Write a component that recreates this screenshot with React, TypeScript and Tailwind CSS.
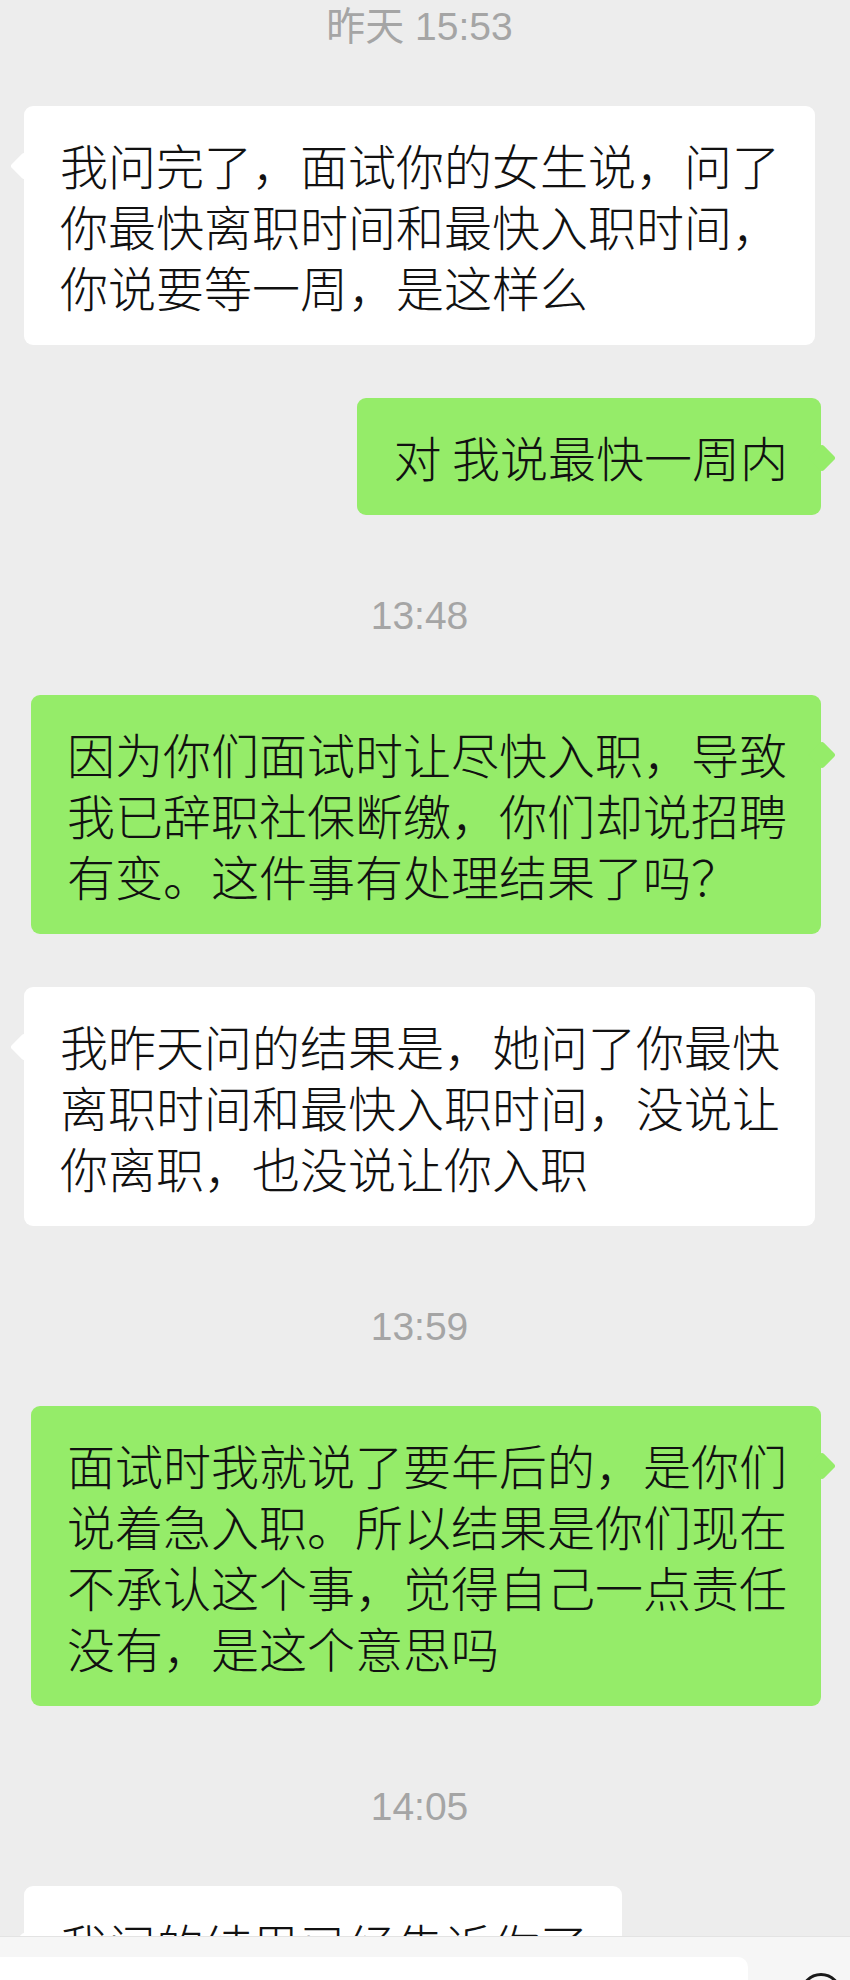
import React from 'react';

type Msg =
  | { kind: 'time'; text: string }
  | { kind: 'in' | 'out'; text: string };

const messages: Msg[] = [
  { kind: 'time', text: '昨天 15:53' },
  { kind: 'in', text: '我问完了，面试你的女生说，问了你最快离职时间和最快入职时间，你说要等一周，是这样么' },
  { kind: 'out', text: '对 我说最快一周内' },
  { kind: 'time', text: '13:48' },
  { kind: 'out', text: '因为你们面试时让尽快入职，导致我已辞职社保断缴，你们却说招聘有变。这件事有处理结果了吗？' },
  { kind: 'in', text: '我昨天问的结果是，她问了你最快离职时间和最快入职时间，没说让你离职，也没说让你入职' },
  { kind: 'time', text: '13:59' },
  { kind: 'out', text: '面试时我就说了要年后的，是你们说着急入职。所以结果是你们现在不承认这个事，觉得自己一点责任没有，是这个意思吗' },
  { kind: 'time', text: '14:05' },
  { kind: 'in', text: '我问的结果已经告诉你了' },
];

const TimeStamp: React.FC<{ text: string; first: boolean }> = ({ text, first }) => (
  <div
    className={`${first ? 'mt-[7px]' : 'mt-[81px]'} pr-[6px] text-center text-[39px] leading-[40px] text-[#a5a5a5] font-['Liberation_Sans','Noto_Sans_CJK_SC',sans-serif]`}
  >
    {text}
  </div>
);

const Bubble: React.FC<{ kind: 'in' | 'out'; text: string; gap: string }> = ({ kind, text, gap }) => {
  const incoming = kind === 'in';
  return (
    <div className={`${gap} flex ${incoming ? 'justify-start' : 'justify-end'}`}>
      <div
        className={`relative rounded-[9px] pl-[36px] py-[28px] text-[48px] leading-[61px] font-light text-[#111111] ${
          incoming ? 'bg-white max-w-[791px] pr-[34px]' : 'bg-[#95ec69] max-w-[790px] pr-[33px]'
        }`}
      >
        {/* tail */}
        <span
          className={`absolute top-[50px] w-[20px] h-[20px] rotate-45 rounded-[3px] ${
            incoming ? 'left-[-10px] bg-white' : 'right-[-11px] bg-[#95ec69]'
          }`}
        />
        <span className="relative">{text}</span>
      </div>
    </div>
  );
};

export default function App() {
  return (
    <div className="relative h-[1980px] w-[850px] overflow-hidden bg-[#ededed] font-['Noto_Sans_CJK_SC','Noto_Sans',sans-serif]">
      <div className="flex flex-col pl-[24px] pr-[29px]">
        {messages.map((m, i) => {
          if (m.kind === 'time') return <TimeStamp key={i} text={m.text} first={i === 0} />;
          const prev = messages[i - 1];
          const gap = prev && prev.kind === 'time' ? 'mt-[59px]' : 'mt-[53px]';
          return <Bubble key={i} kind={m.kind} text={m.text} gap={gap} />;
        })}
      </div>

      {/* input bar */}
      <div className="absolute bottom-0 left-0 right-0 h-[44px] border-t border-[#e3e3e3] bg-[#f6f6f6]">
        <div className="flex items-start">
          <div className="mt-[20px] h-[30px] w-[748px] rounded-tr-[10px] bg-white" />
          <div className="ml-[52px] mt-[36px] h-[42px] w-[42px] rounded-full border-[3px] border-[#1a1a1a]" />
        </div>
      </div>
    </div>
  );
}
